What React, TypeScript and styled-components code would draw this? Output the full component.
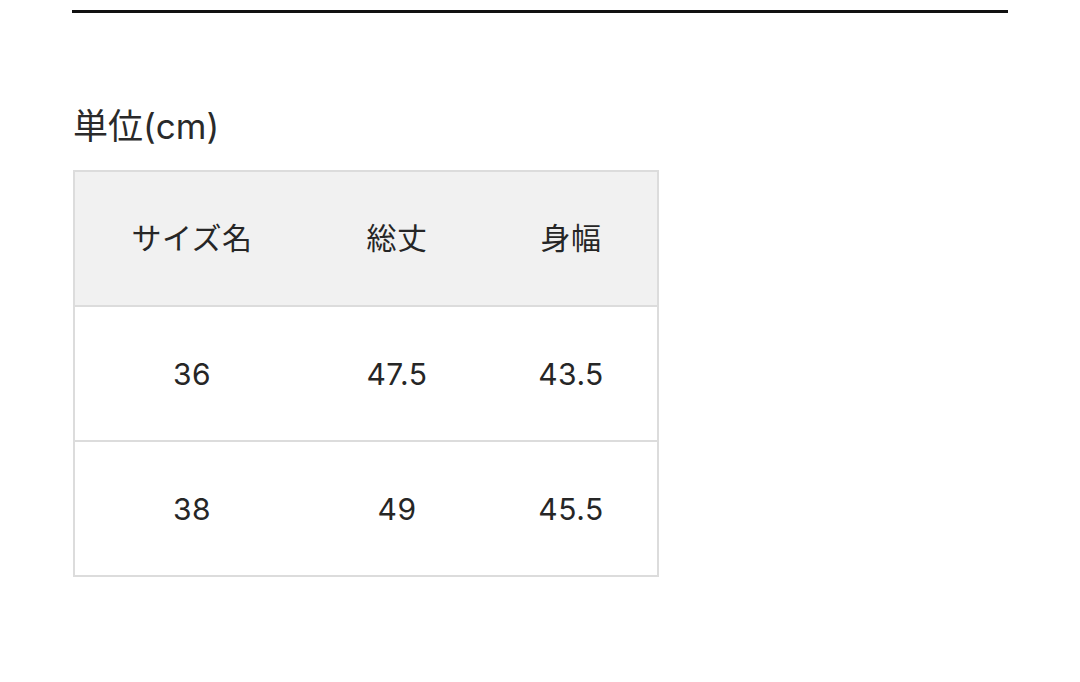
import React from "react";
import styled, { createGlobalStyle } from "styled-components";

const Global = createGlobalStyle`
  html, body { margin: 0; padding: 0; background: #fff; }
  body { font-family: Inter, "Noto Sans CJK JP", sans-serif; color: #222; }
`;

const Page = styled.div`
  padding: 10px 72px 0 72px;
`;

const Rule = styled.div`
  height: 3px;
  background: #111;
`;

const Title = styled.h2`
  margin: 88px 0 0 1px;
  font-size: 35px;
  font-weight: 400;
  line-height: 50px;
  color: #2a2a2a;
`;

const Table = styled.div`
  margin: 19px 0 0 1px;
  width: 586px;
  box-sizing: border-box;
  border: 2px solid #dcdcdc;
`;

const Row = styled.div<{ $head?: boolean }>`
  display: grid;
  grid-template-columns: 234px 176px 172px;
  height: 133px;
  box-sizing: border-box;
  padding-bottom: ${(p) => (p.$head ? "6px" : "0")};
  background: ${(p) => (p.$head ? "#f1f1f1" : "#fff")};
  &:not(:last-child) {
    border-bottom: 2px solid #dcdcdc;
    height: 135px;
  }
`;

const Cell = styled.div`
  display: flex;
  align-items: center;
  justify-content: center;
  font-size: 30px;
  color: #262626;
  letter-spacing: 0.5px;
`;

const rows = [
  ["36", "47.5", "43.5"],
  ["38", "49", "45.5"],
];

export default function App() {
  return (
    <Page>
      <Global />
      <Rule />
      <Title>単位(cm)</Title>
      <Table>
        <Row $head>
          <Cell>サイズ名</Cell>
          <Cell>総丈</Cell>
          <Cell>身幅</Cell>
        </Row>
        {rows.map((r) => (
          <Row key={r[0]}>
            {r.map((c, i) => (
              <Cell key={i}>{c}</Cell>
            ))}
          </Row>
        ))}
      </Table>
    </Page>
  );
}
